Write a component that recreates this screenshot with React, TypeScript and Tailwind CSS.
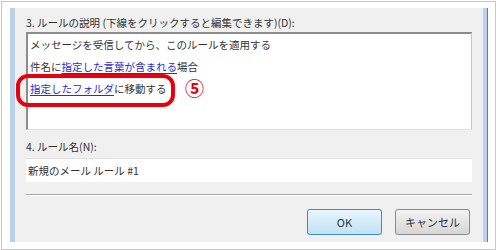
const font = { fontFamily: '"Noto Sans CJK JP", "Liberation Sans", sans-serif' };

function Link({ children }: { children: React.ReactNode }) {
  return <span className="text-[#2a2ad8] underline underline-offset-2">{children}</span>;
}

export default function App() {
  return (
    <div className="h-[250px] w-[496px] bg-white pl-[1px] pt-[1px]" style={font}>
      <div className="flex h-[249px] w-[495px] border border-[#c8c8c8] pb-[7px] pl-[8px] pr-[7px] pt-[6px]">
        <div className="flex flex-1">
          <div className="w-[5px] bg-[#b9d1ea]" />
          <div className="flex flex-1 flex-col bg-[#f0f0f0] px-[11px] pt-[7px] text-[10.5px] text-[#333]">
            <div className="h-[16px] leading-[16px]">3. ルールの説明 (下線をクリックすると編集できます)(D):</div>

            <div className="relative mt-[1px] h-[98px] border-b border-l-2 border-r border-t-2 border-b-[#e2e2e2] border-l-[#8c8c8c] border-r-[#c6c6c6] border-t-[#8c8c8c] bg-white pl-[2px] leading-[22px]">
              <div>メッセージを受信してから、このルールを適用する</div>
              <div>
                件名に<Link>指定した言葉が含まれる</Link>場合
              </div>
              <div>
                <Link>指定したフォルダ</Link>に移動する
              </div>
              <div className="absolute left-[-12px] top-[40px] h-[33px] w-[159px] rounded-[12px] border-[4.5px] border-[#e8000f]" />
              <div className="absolute left-[157px] top-[44px] text-[19px] font-bold leading-[19px] text-[#e8000f]">⑤</div>
            </div>

            <div className="mt-[9px] h-[16px] leading-[16px]">4. ルール名(N):</div>
            <div className="mt-[3px] flex h-[24px] items-center border-t border-[#e0e0e0] bg-white pl-[2px]">
              新規のメール ルール #1
            </div>

            <div className="mt-[12px] border-b border-b-white border-t border-t-[#a8a8a8]" />

            <div className="mr-[2px] mt-[13px] flex justify-end gap-[13px] text-[11px]">
              <button className="h-[26px] w-[75px] rounded-[3px] border border-[#3c8ecb] bg-gradient-to-b from-[#eaf6fd] to-[#bfe2f6] text-[#333]">
                OK
              </button>
              <button className="h-[26px] w-[75px] rounded-[3px] border border-[#8a8a8a] bg-gradient-to-b from-[#f4f4f4] to-[#d6d6d6] text-[#333]">
                キャンセル
              </button>
            </div>
          </div>
          <div className="w-[5px] border-r border-[#5b7ea6] bg-[#b9d1ea]" />
        </div>
      </div>
    </div>
  );
}
